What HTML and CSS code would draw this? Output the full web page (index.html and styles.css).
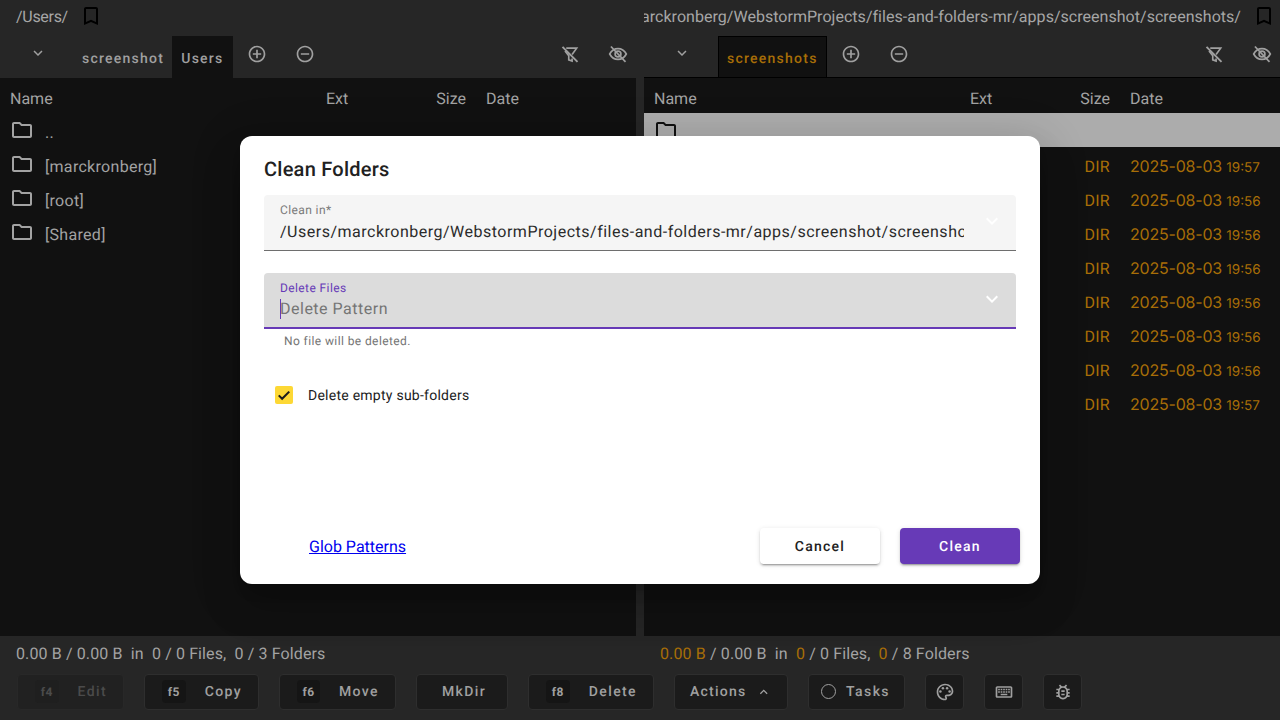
FILE: index.html
```html
<!DOCTYPE html>
<html lang="en">
<head>
    <meta charset="UTF-8">
    <title>Files and Folders</title>
    <link rel="stylesheet" href="styles.css">
</head>
<body>
    <svg class="defs" aria-hidden="true">
        <symbol id="i-bookmark" viewBox="0 0 24 24"><path d="M17 3H7c-1.1 0-1.99.9-1.99 2L5 21l7-3 7 3V5c0-1.1-.9-2-2-2zm0 15l-5-2.18L7 18V5h10v13z"/></symbol>
        <symbol id="i-folder" viewBox="0 0 24 24"><path d="M9.17 6l2 2H20v10H4V6h5.17M10 4H4c-1.1 0-1.99.9-1.99 2L2 18c0 1.1.9 2 2 2h16c1.1 0 2-.9 2-2V8c0-1.1-.9-2-2-2h-8l-2-2z"/></symbol>
        <symbol id="i-chevron" viewBox="0 0 24 24"><path d="M7.41 8.59L12 13.17l4.59-4.58L18 10l-6 6-6-6z"/></symbol>
        <symbol id="i-add" viewBox="0 0 24 24"><path d="M13 7h-2v4H7v2h4v4h2v-4h4v-2h-4V7zm-1-5C6.48 2 2 6.48 2 12s4.48 10 10 10 10-4.48 10-10S17.52 2 12 2zm0 18c-4.41 0-8-3.59-8-8s3.59-8 8-8 8 3.59 8 8-3.59 8-8 8z"/></symbol>
        <symbol id="i-remove" viewBox="0 0 24 24"><path d="M7 11v2h10v-2H7zm5-9C6.48 2 2 6.48 2 12s4.48 10 10 10 10-4.48 10-10S17.52 2 12 2zm0 18c-4.41 0-8-3.59-8-8s3.59-8 8-8 8 3.59 8 8-3.59 8-8 8z"/></symbol>
        <symbol id="i-filter-off" viewBox="0 0 24 24"><path d="M7.500 5H20l-5.500 7.500M6 8.500l4.500 5.500v5l4 1.500v-3" fill="none" stroke="currentColor" stroke-width="2"/><path d="M3 3.500L21 21.500" fill="none" stroke="currentColor" stroke-width="2.400"/></symbol>
        <symbol id="i-eye-off" viewBox="0 0 24 24"><path d="M2 12c2.200-4 5.800-6.500 10-6.500s7.800 2.500 10 6.500c-2.200 4-5.800 6.500-10 6.500S4.200 16 2 12z" fill="none" stroke="currentColor" stroke-width="2"/><circle cx="12" cy="12" r="3.500" fill="none" stroke="currentColor" stroke-width="2"/><path d="M3.500 3L21 21.500" fill="none" stroke="currentColor" stroke-width="2"/></symbol>
        <symbol id="i-palette" viewBox="0 0 24 24"><path d="M12 22C6.490 22 2 17.510 2 12S6.490 2 12 2s10 4.040 10 9c0 3.310-2.690 6-6 6h-1.770c-.280 0-.500.220-.500.500 0 .120.050.230.130.330.410.470.640 1.060.640 1.670 0 1.380-1.120 2.500-2.500 2.500zm0-18c-4.410 0-8 3.590-8 8s3.590 8 8 8c.280 0 .500-.220.500-.500 0-.160-.080-.280-.140-.350-.410-.460-.630-1.050-.630-1.650 0-1.380 1.120-2.500 2.500-2.500H16c2.210 0 4-1.790 4-4 0-3.860-3.590-7-8-7z"/><circle cx="6.500" cy="11.500" r="1.500"/><circle cx="9.500" cy="7.500" r="1.500"/><circle cx="14.500" cy="7.500" r="1.500"/><circle cx="17.500" cy="11.500" r="1.500"/></symbol>
        <symbol id="i-keyboard" viewBox="0 0 24 24"><path d="M20 7v10H4V7h16m0-2H4c-1.100 0-1.990.900-1.990 2L2 17c0 1.100.900 2 2 2h16c1.100 0 2-.900 2-2V7c0-1.100-.900-2-2-2zm-9 3h2v2h-2zm0 3h2v2h-2zM8 8h2v2H8zm0 3h2v2H8zm-3 0h2v2H5zm0-3h2v2H5zm3 6h8v2H8zm6-3h2v2h-2zm0-3h2v2h-2zm3 3h2v2h-2zm0-3h2v2h-2z"/></symbol>
        <symbol id="i-bug" viewBox="0 0 24 24"><path d="M20 8h-2.810c-.450-.780-1.070-1.450-1.820-1.960L17 4.410 15.590 3l-2.170 2.170C12.960 5.060 12.490 5 12 5s-.960.060-1.410.170L8.410 3 7 4.410l1.620 1.630C7.880 6.550 7.260 7.220 6.810 8H4v2h2.090c-.050.330-.090.660-.090 1v1H4v2h2v1c0 .340.040.670.090 1H4v2h2.810c1.040 1.790 2.970 3 5.190 3s4.150-1.210 5.190-3H20v-2h-2.090c.050-.330.090-.660.090-1v-1h2v-2h-2v-1c0-.340-.040-.670-.090-1H20V8zm-4 7c0 2.210-1.790 4-4 4s-4-1.790-4-4v-4c0-2.210 1.790-4 4-4s4 1.790 4 4v4zm-6-1h4v2h-4zm0-4h4v2h-4z"/></symbol>
    </svg>

    <div class="panes">
        <section class="pane">
            <div class="path-bar">
                <span class="path-text path-short">/Users/</span>
                <svg class="bookmark"><use href="#i-bookmark"/></svg>
            </div>
            <div class="tab-bar">
                <button class="menu-btn"><svg class="icon-sm"><use href="#i-chevron"/></svg></button>
                <span class="tab tab-idle">screenshot</span>
                <span class="tab tab-active">Users</span>
                <button class="tool-btn first"><svg class="icon"><use href="#i-add"/></svg></button>
                <button class="tool-btn"><svg class="icon"><use href="#i-remove"/></svg></button>
                <button class="tool-btn push"><svg class="icon"><use href="#i-filter-off"/></svg></button>
                <button class="tool-btn"><svg class="icon"><use href="#i-eye-off"/></svg></button>
            </div>
            <div class="list">
                <div class="row head"><span>Name</span><span>Ext</span><span class="size">Size</span><span class="date">Date</span></div>
                <div class="row"><span class="name"><svg class="folder"><use href="#i-folder"/></svg>..</span></div>
                <div class="row"><span class="name"><svg class="folder"><use href="#i-folder"/></svg>[marckronberg]</span></div>
                <div class="row"><span class="name"><svg class="folder"><use href="#i-folder"/></svg>[root]</span></div>
                <div class="row"><span class="name"><svg class="folder"><use href="#i-folder"/></svg>[Shared]</span></div>
            </div>
            <div class="status">0.00 B / 0.00 B &nbsp;in &nbsp;0 / 0 Files, &nbsp;0 / 3 Folders</div>
        </section>

        <section class="pane">
            <div class="path-bar path-right">
                <span class="path-text">/Users/marckronberg/WebstormProjects/files-and-folders-mr/apps/screenshot/screenshots/</span>
                <svg class="bookmark"><use href="#i-bookmark"/></svg>
            </div>
            <div class="tab-bar">
                <button class="menu-btn"><svg class="icon-sm"><use href="#i-chevron"/></svg></button>
                <span class="tab tab-active tab-focus">screenshots</span>
                <button class="tool-btn first"><svg class="icon"><use href="#i-add"/></svg></button>
                <button class="tool-btn"><svg class="icon"><use href="#i-remove"/></svg></button>
                <button class="tool-btn push"><svg class="icon"><use href="#i-filter-off"/></svg></button>
                <button class="tool-btn"><svg class="icon"><use href="#i-eye-off"/></svg></button>
            </div>
            <div class="list list-focus">
                <div class="row head"><span>Name</span><span>Ext</span><span class="size">Size</span><span class="date">Date</span></div>
                <div class="row row-current"><span class="name"><svg class="folder"><use href="#i-folder"/></svg></span></div>
                <div class="row selected"><span></span><span></span><span class="size">DIR</span><span class="date">2025-08-03 <small>19:57</small></span></div>
                <div class="row selected"><span></span><span></span><span class="size">DIR</span><span class="date">2025-08-03 <small>19:56</small></span></div>
                <div class="row selected"><span></span><span></span><span class="size">DIR</span><span class="date">2025-08-03 <small>19:56</small></span></div>
                <div class="row selected"><span></span><span></span><span class="size">DIR</span><span class="date">2025-08-03 <small>19:56</small></span></div>
                <div class="row selected"><span></span><span></span><span class="size">DIR</span><span class="date">2025-08-03 <small>19:56</small></span></div>
                <div class="row selected"><span></span><span></span><span class="size">DIR</span><span class="date">2025-08-03 <small>19:56</small></span></div>
                <div class="row selected"><span></span><span></span><span class="size">DIR</span><span class="date">2025-08-03 <small>19:56</small></span></div>
                <div class="row selected"><span></span><span></span><span class="size">DIR</span><span class="date">2025-08-03 <small>19:57</small></span></div>
            </div>
            <div class="status"><span class="accent">0.00 B</span> / 0.00 B &nbsp;in &nbsp;<span class="accent">0</span> / 0 Files, &nbsp;<span class="accent">0</span> / 8 Folders</div>
        </section>
    </div>

    <footer class="toolbar">
        <button class="btn btn-key disabled w-edit"><kbd>f4</kbd>Edit</button>
        <button class="btn btn-key w-copy"><kbd>f5</kbd>Copy</button>
        <button class="btn btn-key w-move"><kbd>f6</kbd>Move</button>
        <button class="btn w-mkdir">MkDir</button>
        <button class="btn btn-key w-delete"><kbd>f8</kbd>Delete</button>
        <button class="btn w-actions">Actions<svg class="icon-sm flip"><use href="#i-chevron"/></svg></button>
        <button class="btn w-tasks"><span class="ring"></span>Tasks</button>
        <button class="btn btn-icon"><svg class="icon-tb"><use href="#i-palette"/></svg></button>
        <button class="btn btn-icon"><svg class="icon-tb"><use href="#i-keyboard"/></svg></button>
        <button class="btn btn-icon"><svg class="icon-tb"><use href="#i-bug"/></svg></button>
    </footer>

    <div class="dialog">
        <h2>Clean Folders</h2>
        <div class="field">
            <label>Clean in*</label>
            <div class="value">/Users/marckronberg/WebstormProjects/files-and-folders-mr/apps/screenshot/screenshots/</div>
            <svg class="field-arrow"><use href="#i-chevron"/></svg>
        </div>
        <div class="field field-focus">
            <label>Delete Files</label>
            <div class="value placeholder">Delete Pattern</div>
            <svg class="field-arrow"><use href="#i-chevron"/></svg>
        </div>
        <p class="hint">No file will be deleted.</p>
        <div class="check-row">
            <span class="checkbox">
                <svg viewBox="0 0 24 24"><path d="M5 12.500l4.500 4.500L19 7.500" fill="none" stroke="#1c1c1c" stroke-width="2.800"/></svg>
            </span>
            <span class="check-label">Delete empty sub-folders</span>
        </div>
        <div class="dialog-actions">
            <a href="#" class="glob-link">Glob Patterns</a>
            <button class="raised">Cancel</button>
            <button class="raised primary">Clean</button>
        </div>
    </div>
</body>
</html>
```

FILE: styles.css
```css
* {
    box-sizing: border-box;
}
html, body {
    height: 100%;
}
body {
    margin: 0;
    height: 720px;
    overflow: hidden;
    position: relative;
    background-color: #262626;
    color: #a3a3a3;
    font-family: Roboto, "Liberation Sans", sans-serif;
    font-size: 16px;
    text-rendering: geometricPrecision;
    display: flex;
    flex-direction: column;
}
button {
    font-family: inherit;
    text-rendering: inherit;
    border: none;
    background: none;
    color: inherit;
    padding: 0;
}
svg {
    fill: currentColor;
}
.defs {
    display: none;
}

.panes {
    display: grid;
    grid-template-columns: 636px 636px;
    column-gap: 8px;
    height: 672px;
}
.pane {
    display: flex;
    flex-direction: column;
    min-width: 0;
}

.path-bar {
    height: 36px;
    padding: 0 16px 4px;
    display: flex;
    align-items: center;
    overflow: hidden;
    color: #a6a6a6;
}
.path-right {
    justify-content: flex-end;
    padding-right: 4px;
}
.path-text {
    white-space: nowrap;
    flex-shrink: 0;
    letter-spacing: .03px;
}
.path-short {
    letter-spacing: -.3px;
}
.bookmark {
    width: 24px;
    height: 24px;
    margin-left: 11px;
    flex-shrink: 0;
    color: #000;
}

.tab-bar {
    height: 42px;
    display: flex;
    align-items: flex-start;
    color: #a0a0a0;
}
.menu-btn {
    width: 48px;
    height: 34px;
    margin: 0 12px 0 14px;
    display: flex;
    align-items: center;
    justify-content: center;
}
.tab {
    height: 42px;
    padding: 15px 9px 0;
    font-size: 14px;
    font-weight: 500;
    line-height: 16px;
    letter-spacing: 1.25px;
    white-space: nowrap;
}
.tab-idle {
    margin-left: -1px;
    padding-right: 8px;
}
.tab-active {
    background-color: #111;
}
.tab-focus {
    color: #a86e07;
    border: 1px solid #000;
    border-bottom: none;
    padding: 14px 8px 0;
}
.tool-btn {
    width: 36px;
    height: 36px;
    margin-right: 12px;
    display: flex;
    align-items: center;
    justify-content: center;
}
.tool-btn:last-child {
    margin-right: 0;
}
.tool-btn.first {
    margin-left: 6px;
}
.tool-btn.push {
    margin-left: auto;
}
.icon {
    width: 20px;
    height: 20px;
}
.icon-sm {
    width: 18px;
    height: 18px;
}
.flip {
    transform: rotate(180deg);
    margin-left: 9px;
}

.list {
    flex: 1;
    background-color: #111;
    overflow: hidden;
}
.list-focus {
    border-top: 1px solid #000;
    margin-top: -1px;
}
.row {
    display: grid;
    grid-template-columns: 316px 100px 40px 1fr;
    height: 34px;
    padding: 6px 0 0 10px;
    align-items: center;
    line-height: 20px;
    white-space: nowrap;
}
.head {
    height: 35px;
    padding-top: 7px;
}
.name {
    display: flex;
    align-items: center;
    grid-column: 1 / 3;
    letter-spacing: .3px;
}
.folder {
    width: 24px;
    height: 24px;
    margin: -6px 11px 0 0;
}
.size {
    text-align: right;
}
.date {
    padding-left: 20px;
}
.selected .size {
    letter-spacing: .3px;
}
.selected .date {
    font-family: Inter, Roboto, sans-serif;
    letter-spacing: -.2px;
}
.selected .date small {
    font-size: 13.5px;
    letter-spacing: 0;
}
.row-current {
    background-color: #acacac;
    color: #111;
}
.selected {
    color: #a86e07;
}

.status {
    height: 36px;
    padding: 0 16px 2px;
    display: flex;
    align-items: center;
    white-space: pre-wrap;
    letter-spacing: .12px;
    background-color: #262626;
    color: #a3a3a3;
}
.accent {
    color: #a86e07;
}

.toolbar {
    height: 48px;
    padding: 2px 0 0 17px;
    display: flex;
    gap: 20px;
    align-items: flex-start;
}
.btn {
    height: 36px;
    background-color: #1b1b1b;
    border: 1px solid #2e2e2e;
    border-radius: 4px;
    padding: 0 16px 1px;
    display: flex;
    align-items: center;
    justify-content: center;
    font-size: 14px;
    font-weight: 500;
    letter-spacing: 1.4px;
    color: #a0a0a0;
}
.btn-key {
    justify-content: flex-start;
    padding-left: 17px;
}
.btn kbd {
    width: 25px;
    height: 23px;
    margin-right: 19px;
    background-color: #151515;
    border-radius: 4px;
    display: flex;
    align-items: center;
    justify-content: center;
    font-family: inherit;
    font-size: 12px;
    font-weight: 700;
    letter-spacing: .5px;
}
.disabled {
    color: #4b4b4b;
    background-color: #212121;
    border-color: #282828;
}
.disabled kbd {
    background-color: #1f1f1f;
}
.w-edit { width: 107px; }
.w-copy { width: 115px; }
.w-move { width: 117px; }
.w-mkdir {
    width: 92px;
    padding-left: 20px;
}
.w-delete { width: 126px; }
.w-actions {
    width: 114px;
    justify-content: flex-start;
    padding-left: 15px;
    letter-spacing: 1.25px;
}
.w-tasks {
    width: 97px;
    padding-right: 18px;
}
.btn-icon {
    width: 39px;
    padding: 0;
}
.icon-tb {
    width: 20px;
    height: 20px;
}
.ring {
    width: 15px;
    height: 15px;
    flex-shrink: 0;
    border: 1.5px solid #a0a0a0;
    border-radius: 50%;
    margin-right: 10px;
}

.dialog {
    position: absolute;
    left: 240px;
    top: 136px;
    width: 800px;
    height: 448px;
    padding: 22px 24px 20px;
    background-color: #fff;
    border-radius: 12px;
    color: #212121;
    display: flex;
    flex-direction: column;
    box-shadow: 0 11px 15px -7px rgba(0,0,0,.2), 0 24px 38px 3px rgba(0,0,0,.14), 0 9px 46px 8px rgba(0,0,0,.12);
}
.dialog h2 {
    margin: 0 0 14px;
    height: 23px;
    font-size: 20px;
    line-height: 23px;
    font-weight: 500;
    letter-spacing: .25px;
}
.field {
    position: relative;
    height: 56px;
    padding: 8px 52px 0 16px;
    background-color: #f5f5f5;
    border-radius: 4px 4px 0 0;
    border-bottom: 1px solid #6e6e6e;
    overflow: hidden;
}
.field label {
    display: block;
    font-size: 12px;
    line-height: 14px;
    letter-spacing: .4px;
    color: #7a7a7a;
}
.value {
    margin-top: 4px;
    line-height: 22px;
    letter-spacing: .5px;
    white-space: nowrap;
    overflow: hidden;
    color: #2b2b2b;
}
.field-arrow {
    position: absolute;
    right: 12px;
    top: 14px;
    width: 24px;
    height: 24px;
    color: #fff;
}
.field-focus {
    margin-top: 22px;
    background-color: #dcdcdc;
    border-bottom: 2px solid #673ab7;
}
.field-focus label {
    color: #673ab7;
}
.placeholder {
    color: #757575;
    border-left: 1px solid #673ab7;
    height: 20px;
    line-height: 20px;
    margin-top: 4px;
    text-indent: -1px;
    overflow: visible;
}
.hint {
    margin: 5px 0 0 20px;
    font-size: 12px;
    line-height: 14px;
    letter-spacing: .4px;
    color: #757575;
}
.check-row {
    margin: 38px 0 0 11px;
    display: flex;
    align-items: center;
    font-size: 14px;
    letter-spacing: .25px;
    color: #212121;
}
.check-label {
    padding-top: 1px;
}
.checkbox {
    width: 18px;
    height: 18px;
    margin-right: 15px;
    background-color: #fdd835;
    border-radius: 2px;
    display: flex;
}
.dialog-actions {
    margin: auto -4px 0 0;
    display: flex;
    align-items: center;
    gap: 20px;
}
.glob-link {
    margin-left: 45px;
    margin-right: auto;
    color: #0000ee;
}
.raised {
    width: 120px;
    height: 36px;
    padding-top: 1px;
    border-radius: 4px;
    background-color: #fff;
    color: #212121;
    font-size: 14px;
    font-weight: 500;
    letter-spacing: 1.25px;
    box-shadow: 0 3px 1px -2px rgba(0,0,0,.2), 0 2px 2px 0 rgba(0,0,0,.14), 0 1px 5px 0 rgba(0,0,0,.12);
}
.primary {
    background-color: #673ab7;
    color: #fff;
}
```
